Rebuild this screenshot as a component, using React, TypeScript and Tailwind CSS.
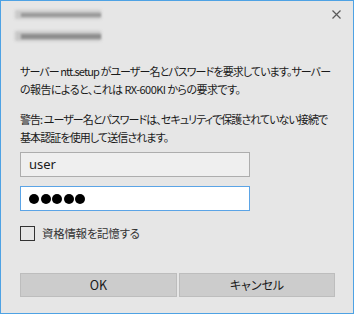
export default function App() {
  const jp = "font-['Yu_Gothic_UI','Noto_Sans_CJK_JP',sans-serif] [font-feature-settings:'palt']";
  return (
    <div className="w-[354px] h-[314px] bg-[#e6e6e6] border border-[#4ea2e4] relative overflow-hidden">
      {/* blurred title */}
      <div className="h-[62px] pl-[14px] pt-[9px] relative">
        <div className="w-[86px] h-[9px] bg-[#c9c9c9] blur-[1.5px]" />
        <div className="w-[80px] h-[4px] bg-[#9a9a9a] blur-[1px] -mt-[6px] ml-[6px]" />
        <div className="w-[86px] h-[10px] bg-[#c6c6c6] blur-[1.5px] mt-[14px]" />
        <div className="w-[80px] h-[5px] bg-[#8e8e8e] blur-[1px] -mt-[7px] ml-[6px]" />
        <svg className="absolute right-[12px] top-[9px]" width="9" height="9" viewBox="0 0 9 9">
          <path d="M0.5 0.5 L8.5 8.5 M8.5 0.5 L0.5 8.5" stroke="#5a5a5a" strokeWidth="1.2" />
        </svg>
      </div>

      <div className={`pl-[19px] text-[11px] leading-[17.5px] text-[#1a1a1a] whitespace-nowrap ${jp}`}>
        <p>
          <span className="block tracking-[-0.9px]">サーバー ntt.setup がユーザー名とパスワードを要求しています。サーバー</span>
          <span className="block tracking-[-0.55px]">の報告によると、これは RX-600KI からの要求です。</span>
        </p>
        <p className="mt-[13px]">
          <span className="block tracking-[-0.95px]">警告: ユーザー名とパスワードは、セキュリティで保護されていない接続で</span>
          <span className="block tracking-[-0.9px]">基本認証を使用して送信されます。</span>
        </p>

        <div className="mt-[6px] w-[230px] h-[25px] border border-[#adadad] bg-[#efefef] pl-[8px] flex items-center text-[13px] font-['Segoe_UI','Noto_Sans',sans-serif]">
          user
        </div>
        <div className="mt-[9px] w-[230px] h-[25px] border border-[#5ba4e6] bg-white pl-[8px] flex items-center gap-[1.5px]">
          {[0, 1, 2, 3, 4].map((i) => (
            <span key={i} className="w-[10px] h-[10px] rounded-full bg-black" />
          ))}
        </div>

        <div className="mt-[14px] flex items-center gap-[7px]">
          <div className="w-[15px] h-[15px] border-[1.5px] border-[#333333] bg-[#e6e6e6]" />
          <span className="text-[11.5px] text-[#333333] tracking-[-0.3px]">資格情報を記憶する</span>
        </div>

        <div className="mt-[30px] flex gap-[2px]">
          <button className="w-[157px] h-[24px] bg-[#cccccc] border border-[#bdbdbd] text-[12.5px] text-[#1a1a1a]">
            OK
          </button>
          <button className="w-[156px] h-[24px] bg-[#cccccc] border border-[#bdbdbd] text-[12px] text-[#1a1a1a]">
            キャンセル
          </button>
        </div>
      </div>
    </div>
  );
}
